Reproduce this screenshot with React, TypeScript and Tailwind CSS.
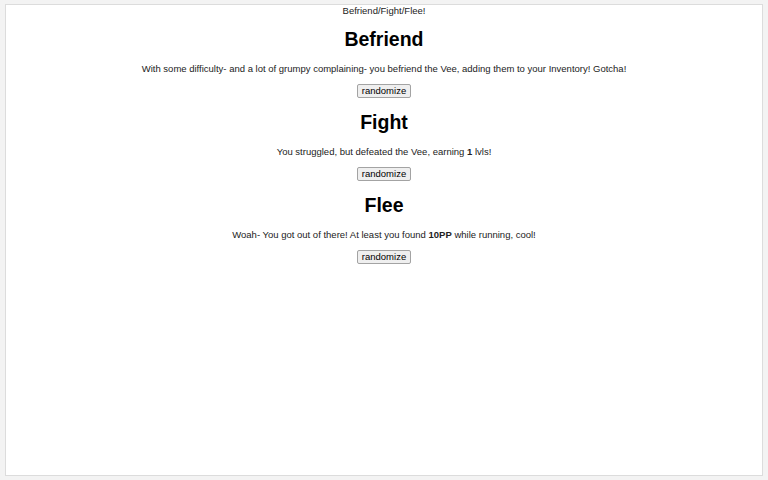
import React from "react";

function Section({ title, children }: { title: string; children: React.ReactNode }) {
  return (
    <div className="flex flex-col items-center">
      <h1 className="text-[19.5px] leading-[24px] font-bold text-black">{title}</h1>
      <p className="mt-[12px] text-[9.5px] leading-[12px] text-[#222]">{children}</p>
      <button className="mt-[9px] h-[14px] px-[4px] text-[9.5px] leading-[12px] text-black bg-[#efefef] border border-[#a3a3a3] rounded-[2px]">
        randomize
      </button>
      <div className="h-[12px]" />
    </div>
  );
}

export default function App() {
  return (
    <div
      className="w-[768px] h-[480px] bg-[#f3f3f3] pt-[4px] px-[5px]"
      style={{ fontFamily: '"Liberation Sans", Arial, sans-serif' }}
    >
      <div className="h-[472px] bg-white border border-[#dcdcdc] flex flex-col items-center">
        <div className="text-[9.5px] leading-[11px] text-[#222]">Befriend/Fight/Flee!</div>
        <div className="h-[11px]" />
        <Section title="Befriend">
          With some difficulty- and a lot of grumpy complaining- you befriend the Vee, adding them to your Inventory! Gotcha!
        </Section>
        <Section title="Fight">
          You struggled, but defeated the Vee, earning <b>1</b> lvls!
        </Section>
        <Section title="Flee">
          Woah- You got out of there! At least you found <b>10PP</b> while running, cool!
        </Section>
      </div>
    </div>
  );
}
